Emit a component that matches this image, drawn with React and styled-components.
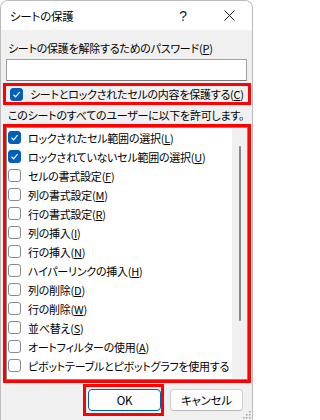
import React from 'react';
import styled, { createGlobalStyle } from 'styled-components';

const GlobalStyle = createGlobalStyle`
  html, body {
    margin: 0;
    padding: 0;
    background: #ffffff;
  }
  body {
    font-family: "Noto Sans CJK JP", "Noto Sans", sans-serif;
    font-feature-settings: "palt";
    font-size: 11px;
    letter-spacing: -0.25px;
    color: #000;
  }
`;

const Window = styled.div`
  position: relative;
  width: 253px;
  height: 420px;
  box-sizing: border-box;
  border: 1px solid #bcbcbc;
  border-bottom: none;
  border-radius: 8px 8px 0 0;
  background: #f0f0f0;
  overflow: hidden;
  display: flex;
  flex-direction: column;
`;

const TitleBar = styled.div`
  height: 29px;
  background: #ffffff;
  display: flex;
  align-items: center;
  flex-shrink: 0;
`;

const Title = styled.div`
  flex: 1;
  padding-left: 9px;
  font-size: 11.5px;
  line-height: 16px;
`;

const TitleButton = styled.div`
  width: 46px;
  height: 29px;
  display: flex;
  align-items: center;
  justify-content: center;
  font-family: "Liberation Sans", sans-serif;
  font-size: 14px;
  color: #1a1a1a;
`;

const Label = styled.div`
  padding-left: 7px;
  margin-top: ${(p) => p.$top || 0}px;
  line-height: 16px;
  white-space: nowrap;
`;

const Input = styled.div`
  margin: 3px 5px 0 5px;
  height: 22px;
  box-sizing: border-box;
  background: #ffffff;
  border: 1px solid #a0a0a0;
  border-bottom-color: #7a7a7a;
`;

const Highlight = styled.div`
  border: 3px solid #ff0000;
  box-sizing: border-box;
  margin: ${(p) => p.$margin};
  height: ${(p) => p.$height}px;
`;

const CheckRow = styled.div`
  display: flex;
  align-items: center;
  height: ${(p) => p.$height || 19}px;
  padding-left: ${(p) => p.$indent || 1}px;
  white-space: nowrap;
  line-height: 16px;
`;

const Box = styled.span`
  width: 13px;
  height: 13px;
  box-sizing: border-box;
  border-radius: 3px;
  margin-right: 7px;
  flex-shrink: 0;
  display: flex;
  align-items: center;
  justify-content: center;
  background: ${(p) => (p.$checked ? '#005fb8' : '#ffffff')};
  border: 1px solid ${(p) => (p.$checked ? '#005fb8' : '#8a8a8a')};
`;

const ListBox = styled.div`
  height: 100%;
  box-sizing: border-box;
  border: 1px solid #8a8a8a;
  background: #ffffff;
  display: flex;
`;

const Items = styled.div`
  flex: 1;
  padding-top: 0;
  overflow: hidden;
`;

const Track = styled.div`
  width: 15px;
  background: #f0f0f0;
  display: flex;
  justify-content: center;
`;

const Thumb = styled.div`
  width: 2px;
  height: 175px;
  margin-top: 18px;
  border-radius: 1px;
  background: #8a8a8a;
`;

const Footer = styled.div`
  display: flex;
  align-items: center;
  margin-top: 1px;
  padding-left: 82px;
  gap: 6px;
`;

const Button = styled.div`
  width: ${(p) => p.$width}px;
  height: 22px;
  box-sizing: border-box;
  background: #fdfdfd;
  border: 1px solid ${(p) => (p.$primary ? '#005fb8' : '#d0d0d0')};
  border-bottom-color: ${(p) => (p.$primary ? '#005fb8' : '#b8b8b8')};
  border-radius: 4px;
  display: flex;
  align-items: center;
  justify-content: center;
  font-size: 11.5px;
  line-height: 16px;
`;

const Grip = styled.svg`
  position: absolute;
  right: 1px;
  bottom: 1px;
`;

const Check = ({ checked }) => (
  <Box $checked={checked}>
    {checked && (
      <svg width="9" height="9" viewBox="0 0 9 9">
        <path d="M1.5 4.8 L3.6 6.8 L7.6 2.2" fill="none" stroke="#fff" strokeWidth="1.2" />
      </svg>
    )}
  </Box>
);

const items = [
  { text: 'ロックされたセル範囲の選択', key: 'L', checked: true },
  { text: 'ロックされていないセル範囲の選択', key: 'U', checked: true },
  { text: 'セルの書式設定', key: 'F' },
  { text: '列の書式設定', key: 'M' },
  { text: '行の書式設定', key: 'R' },
  { text: '列の挿入', key: 'I' },
  { text: '行の挿入', key: 'N' },
  { text: 'ハイパーリンクの挿入', key: 'H' },
  { text: '列の削除', key: 'D' },
  { text: '行の削除', key: 'W' },
  { text: '並べ替え', key: 'S' },
  { text: 'オートフィルターの使用', key: 'A' },
  { text: 'ピボットテーブルとピボットグラフを使用する' },
];

const App = () => {
  return (
    <>
      <GlobalStyle />
      <Window>
        <TitleBar>
          <Title>シートの保護</Title>
          <TitleButton>?</TitleButton>
          <TitleButton>
            <svg width="11" height="11" viewBox="0 0 11 11">
              <path d="M0.5 0.5 L10.5 10.5 M10.5 0.5 L0.5 10.5" stroke="#1a1a1a" strokeWidth="1" />
            </svg>
          </TitleButton>
        </TitleBar>

        <Label $top={10}>
          シートの保護を解除するためのパスワード(<u>P</u>)
        </Label>
        <Input />

        <Highlight $margin="2px 1px 0 2px" $height={22}>
          <CheckRow $height={16} $indent={4}>
            <Check checked />
            シートとロックされたセルの内容を保護する(<u>C</u>)
          </CheckRow>
        </Highlight>

        <Label $top={2}>このシートのすべてのユーザーに以下を許可します。</Label>

        <Highlight $margin="1px 1px 0 2px" $height={259}>
          <ListBox>
            <Items>
              {items.map((it) => (
                <CheckRow key={it.text}>
                  <Check checked={it.checked} />
                  {it.text}
                  {it.key && (
                    <>
                      (<u>{it.key}</u>)
                    </>
                  )}
                </CheckRow>
              ))}
            </Items>
            <Track>
              <Thumb />
            </Track>
          </ListBox>
        </Highlight>

        <Footer>
          <Highlight $margin="0" $height={32}>
            <CheckRow $height={26} $indent={2}>
              <Button $primary $width={73}>OK</Button>
            </CheckRow>
          </Highlight>
          <Button $width={73}>キャンセル</Button>
        </Footer>

        <Grip width="9" height="9" viewBox="0 0 9 9">
          {[[7, 1], [7, 4], [4, 4], [7, 7], [4, 7], [1, 7]].map(([x, y]) => (
            <rect key={`${x}-${y}`} x={x} y={y} width="1.5" height="1.5" fill="#a0a0a0" />
          ))}
        </Grip>
      </Window>
    </>
  );
};

export default App;
